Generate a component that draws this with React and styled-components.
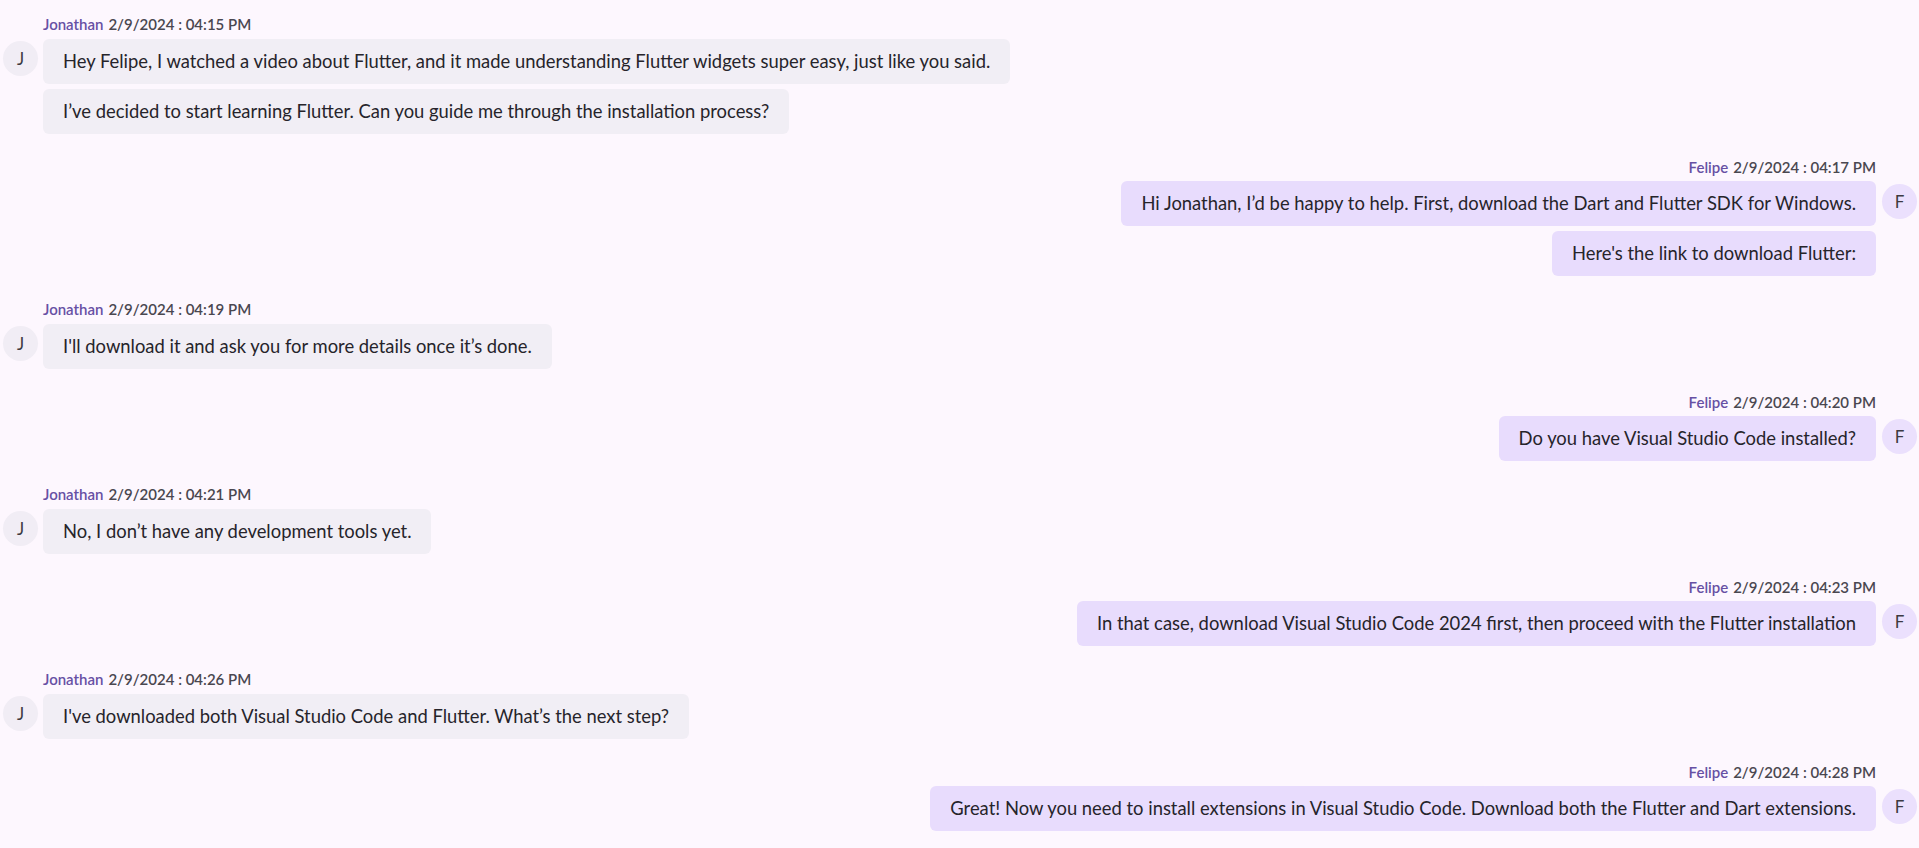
import React from 'react';
import styled, { createGlobalStyle } from 'styled-components';

const GlobalStyle = createGlobalStyle`
    html, body {
        margin: 0;
        padding: 0;
        background: #fdf7fe;
    }
    body {
        font-family: Lato, "Noto Sans", sans-serif;
        color: #242424;
    }
`;

const Thread = styled.div`
    display: flex;
    flex-direction: column;
    gap: 23px;
    padding: 14px 2px 0 3px;
    min-height: 848px;
    box-sizing: border-box;
`;

const Group = styled.div`
    display: flex;
    flex-direction: ${props => (props.mine ? 'row-reverse' : 'row')};
    align-items: flex-start;
    gap: ${props => (props.mine ? '6px' : '5px')};
`;

const Avatar = styled.div`
    flex: 0 0 35px;
    width: 35px;
    height: 35px;
    margin-top: 27px;
    border-radius: 50%;
    display: flex;
    align-items: center;
    justify-content: center;
    background: ${props => (props.mine ? '#ebe0fd' : '#f1edf5')};
    color: #3d3a42;
    font-size: 17px;
`;

const Messages = styled.div`
    display: flex;
    flex-direction: column;
    align-items: ${props => (props.mine ? 'flex-end' : 'flex-start')};
    gap: 5px;
`;

const Header = styled.div`
    font-size: 15px;
    line-height: 20px;
    font-weight: 600;
    color: #4a4750;
    margin-bottom: -0.5px;
    white-space: nowrap;
`;

const Name = styled.span`
    color: #6750a4;
    margin-right: 5px;
`;

const Bubble = styled.div`
    padding: 10px 20px;
    font-size: 18.4px;
    line-height: 25px;
    border-radius: 6px;
    white-space: nowrap;
    background: ${props => (props.mine ? '#e8dcfd' : '#f1eef5')};
    color: #26242b;
`;

const conversation = [
    {
        author: 'Jonathan',
        time: '2/9/2024 : 04:15 PM',
        lines: [
            'Hey Felipe, I watched a video about Flutter, and it made understanding Flutter widgets super easy, just like you said.',
            'I’ve decided to start learning Flutter. Can you guide me through the installation process?',
        ],
    },
    {
        author: 'Felipe',
        mine: true,
        time: '2/9/2024 : 04:17 PM',
        lines: [
            'Hi Jonathan, I’d be happy to help. First, download the Dart and Flutter SDK for Windows.',
            "Here's the link to download Flutter:",
        ],
    },
    {
        author: 'Jonathan',
        time: '2/9/2024 : 04:19 PM',
        lines: ['I\'ll download it and ask you for more details once it’s done.'],
    },
    {
        author: 'Felipe',
        mine: true,
        time: '2/9/2024 : 04:20 PM',
        lines: ['Do you have Visual Studio Code installed?'],
    },
    {
        author: 'Jonathan',
        time: '2/9/2024 : 04:21 PM',
        lines: ['No, I don’t have any development tools yet.'],
    },
    {
        author: 'Felipe',
        mine: true,
        time: '2/9/2024 : 04:23 PM',
        lines: ['In that case, download Visual Studio Code 2024 first, then proceed with the Flutter installation'],
    },
    {
        author: 'Jonathan',
        time: '2/9/2024 : 04:26 PM',
        lines: ['I\'ve downloaded both Visual Studio Code and Flutter. What’s the next step?'],
    },
    {
        author: 'Felipe',
        mine: true,
        time: '2/9/2024 : 04:28 PM',
        lines: ['Great! Now you need to install extensions in Visual Studio Code. Download both the Flutter and Dart extensions.'],
    },
];

const MessageGroup = ({ author, time, lines, mine }) => (
    <Group mine={ mine }>
        <Avatar mine={ mine }>{ author[0] }</Avatar>
        <Messages mine={ mine }>
            <Header>
                <Name>{ author }</Name>
                { time }
            </Header>
            { lines.map(line => (
                <Bubble key={ line } mine={ mine }>{ line }</Bubble>
            )) }
        </Messages>
    </Group>
);

export default function App() {
    return (
        <>
            <GlobalStyle />
            <Thread>
                { conversation.map(group => (
                    <MessageGroup key={ group.time } { ...group } />
                )) }
            </Thread>
        </>
    );
}
